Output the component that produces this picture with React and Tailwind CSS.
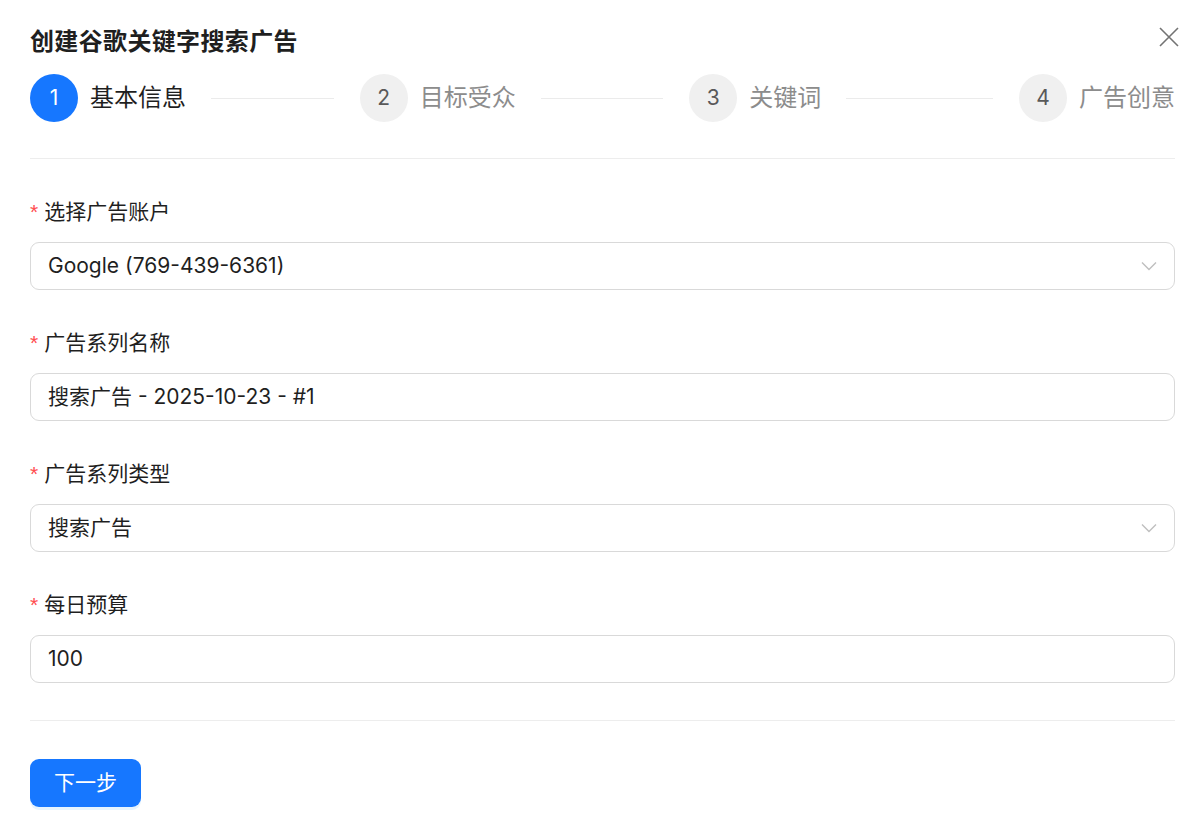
import React from "react";

const FONT = { fontFamily: 'Inter, "Noto Sans CJK SC", "Noto Sans", sans-serif' };

function Step({ n, title, active, last }) {
  return (
    <div className={last ? "flex flex-none items-center" : "flex flex-1 min-w-0 items-center"}>
      <div
        className={
          "flex h-[48px] w-[48px] flex-none items-center justify-center rounded-full text-[21px] " +
          (active ? "bg-[#1677ff] text-white" : "bg-[#f0f0f0] text-[#595959]")
        }
      >
        {n}
      </div>
      <div className={"ml-3 flex-none text-[24px] leading-[36px] " + (active ? "text-[#1f1f1f]" : "text-[#8c8c8c]")}>
        {title}
      </div>
      {!last && <div className="ml-[25px] mr-[26px] h-px flex-1 bg-[#ebebeb]" />}
    </div>
  );
}

function Label({ children }) {
  return (
    <div className="mb-[12px] flex h-[36px] items-center text-[21px] leading-[36px] text-[#1f1f1f]">
      <span className="mr-[6px] text-[21px] text-[#ff4d4f]" style={{ fontFamily: '"Liberation Sans", sans-serif' }}>
        *
      </span>
      {children}
    </div>
  );
}

function Chevron() {
  return (
    <svg width="16" height="10" viewBox="0 0 16 10" fill="none" className="flex-none">
      <path d="M1 1.5 L8 8.5 L15 1.5" stroke="#bfbfbf" strokeWidth="1.4" />
    </svg>
  );
}

function Field({ label, value, select, last }) {
  return (
    <div className={last ? "" : "mb-[35px]"}>
      <Label>{label}</Label>
      <div className="flex h-[48px] items-center justify-between rounded-[9px] border border-[#d9d9d9] bg-white pl-[17px] pr-[17px] text-[21px] text-[#1f1f1f]">
        <span>{value}</span>
        {select && <Chevron />}
      </div>
    </div>
  );
}

export default function App() {
  return (
    <div className="min-h-[831px] w-[1200px] bg-white pl-[30px] pr-[25px] pt-[24px]" style={FONT}>
      <div className="flex items-center justify-between">
        <div className="text-[24px] font-semibold leading-[36px] tracking-[0.35px] text-[#1f1f1f]">创建谷歌关键字搜索广告</div>
        <svg width="20" height="20" viewBox="0 0 20 20" className="mr-[-4px] mt-[-10px]" fill="none">
          <path d="M1 1 L19 19 M19 1 L1 19" stroke="#737373" strokeWidth="1.6" />
        </svg>
      </div>

      <div className="mt-[14px] flex items-center">
        <Step n="1" title="基本信息" active />
        <Step n="2" title="目标受众" />
        <Step n="3" title="关键词" />
        <Step n="4" title="广告创意" last />
      </div>

      <div className="mt-[36px] h-px bg-[#ededed]" />

      <div className="mt-[35px]">
        <Field label="选择广告账户" value="Google (769-439-6361)" select />
        <Field label="广告系列名称" value="搜索广告 - 2025-10-23 - #1" />
        <Field label="广告系列类型" value="搜索广告" select />
        <Field label="每日预算" value="100" last />
      </div>

      <div className="mt-[37px] h-px bg-[#ededed]" />

      <button className="mt-[38px] flex h-[48px] w-[111px] items-center justify-center rounded-[9px] bg-[#1677ff] text-[21px] text-white shadow-[0_3px_0_rgba(5,145,255,0.1)]">
        下一步
      </button>
    </div>
  );
}
